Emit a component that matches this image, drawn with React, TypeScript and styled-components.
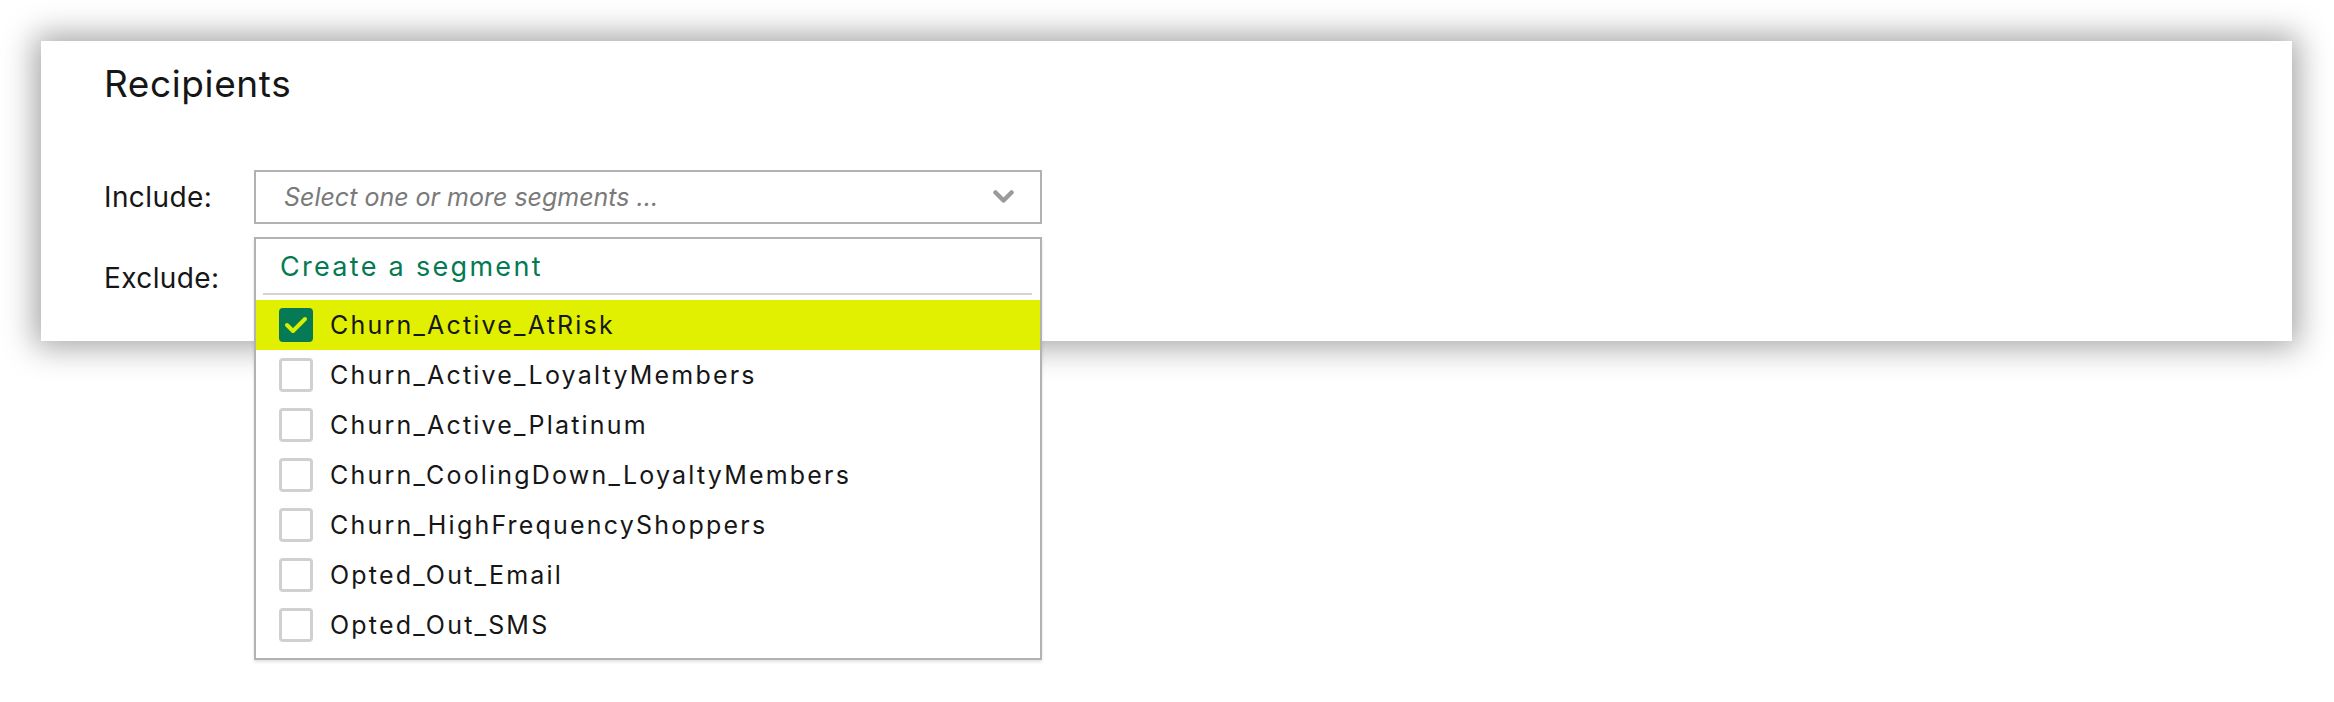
import React from "react";
import styled, { createGlobalStyle } from "styled-components";

const GlobalStyle = createGlobalStyle`
  html, body { margin: 0; padding: 0; background: #ffffff; }
  body { font-family: Inter, "Noto Sans", sans-serif; color: #1b1b1b; }
  * { box-sizing: border-box; }
`;

const Page = styled.div`
  min-height: 100vh;
  padding: 41px;
`;

const Card = styled.section`
  width: 2251px;
  height: 300px;
  background: #ffffff;
  box-shadow: 0 0 30px 6px rgba(0, 0, 0, 0.36);
  padding: 21px 0 0 63px;
`;

const Title = styled.h2`
  margin: 0;
  font-size: 37px;
  font-weight: 400;
  line-height: 44px;
  letter-spacing: 0.6px;
  color: #161616;
`;

const Form = styled.div`
  display: grid;
  grid-template-columns: 150px 788px;
  row-gap: 27px;
  margin-top: 64px;
  align-items: center;
`;

const Label = styled.label`
  font-size: 28px;
  letter-spacing: 0.4px;
  color: #161616;
`;

const FieldWrap = styled.div`
  position: relative;
`;

const Field = styled.div`
  height: 54px;
  border: 2px solid #b2b2b2;
  background: #fff;
  display: flex;
  align-items: center;
  justify-content: space-between;
  padding: 0 26px 0 28px;
`;

const Placeholder = styled.span`
  font-size: 25px;
  font-style: italic;
  color: #7a7a7a;
`;

const Dropdown = styled.div`
  position: absolute;
  top: calc(100% + 13px);
  left: 0;
  width: 788px;
  background: #fff;
  border: 2px solid #b2b2b2;
  box-shadow: 0 2px 3px rgba(0, 0, 0, 0.12);
  padding-bottom: 8px;
  z-index: 2;
`;

const CreateLink = styled.div`
  height: 54px;
  display: flex;
  align-items: center;
  padding-left: 24px;
  font-size: 27px;
  letter-spacing: 2.3px;
  color: #047a52;
`;

const Separator = styled.hr`
  border: 0;
  height: 2px;
  background: #d4d4d4;
  margin: 0 8px 5px 7px;
`;

const Option = styled.div<{ $selected?: boolean }>`
  height: 50px;
  display: flex;
  align-items: center;
  gap: 17px;
  padding-left: 23px;
  font-size: 25px;
  letter-spacing: 2.2px;
  color: #161616;
  background: ${(p) => (p.$selected ? "#e0f000" : "transparent")};
`;

const Box = styled.span<{ $checked?: boolean }>`
  width: 34px;
  height: 34px;
  flex: none;
  border-radius: 4px;
  display: flex;
  align-items: center;
  justify-content: center;
  background: ${(p) => (p.$checked ? "#067a55" : "#ffffff")};
  border: ${(p) => (p.$checked ? "none" : "3px solid #d0d0d0")};
`;

const Chevron = () => (
  <svg width="21" height="14" viewBox="0 0 21 14" aria-hidden="true">
    <polyline
      points="2.5,2.5 10.5,10.5 18.5,2.5"
      fill="none"
      stroke="#9b9b9b"
      strokeWidth="4.5"
      strokeLinecap="round"
      strokeLinejoin="round"
    />
  </svg>
);

const Check = () => (
  <svg width="24" height="20" viewBox="0 0 24 20" aria-hidden="true">
    <polyline
      points="3,10 9,16 21,4"
      fill="none"
      stroke="#d8ef00"
      strokeWidth="4"
      strokeLinecap="round"
      strokeLinejoin="round"
    />
  </svg>
);

const segments = [
  "Churn_Active_AtRisk",
  "Churn_Active_LoyaltyMembers",
  "Churn_Active_Platinum",
  "Churn_CoolingDown_LoyaltyMembers",
  "Churn_HighFrequencyShoppers",
  "Opted_Out_Email",
  "Opted_Out_SMS",
];

export default function App() {
  return (
    <>
      <GlobalStyle />
      <Page>
        <Card>
          <Title>Recipients</Title>
          <Form>
            <Label>Include:</Label>
            <FieldWrap>
              <Field>
                <Placeholder>Select one or more segments ...</Placeholder>
                <Chevron />
              </Field>
              <Dropdown>
                <CreateLink>Create a segment</CreateLink>
                <Separator />
                {segments.map((s, i) => (
                  <Option key={s} $selected={i === 0}>
                    <Box $checked={i === 0}>{i === 0 && <Check />}</Box>
                    {s}
                  </Option>
                ))}
              </Dropdown>
            </FieldWrap>
            <Label>Exclude:</Label>
            <FieldWrap>
              <Field>
                <span />
                <Chevron />
              </Field>
            </FieldWrap>
          </Form>
        </Card>
      </Page>
    </>
  );
}
